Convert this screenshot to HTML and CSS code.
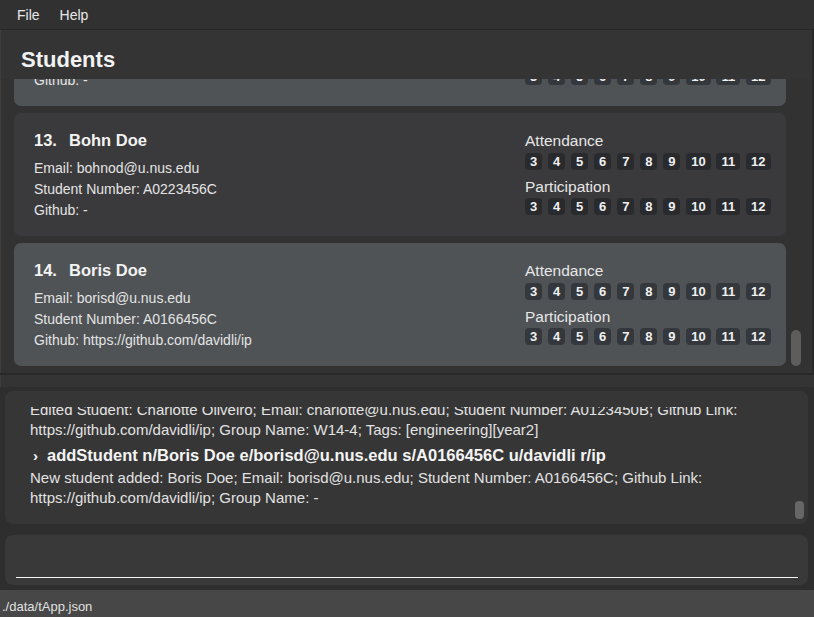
FILE: index.html
```html
<!DOCTYPE html>
<html>
<head>
<meta charset="utf-8">
<link rel="stylesheet" href="styles.css">
</head>
<body>
<div class="app">
  <div class="menubar">
    <span class="menu-item">File</span>
    <span class="menu-item">Help</span>
  </div>
  <div class="list-panel">
    <div class="list-title">Students</div>
    <div class="list-viewport">
      <div class="list-inner">
        <div class="card even">
          <div class="card-left">
            <div class="card-name"><span class="idx">12.</span><span>Bernice Doe</span></div>
            <div class="info">Email: berniced@u.nus.edu</div>
            <div class="info">Student Number: A0123456C</div>
            <div class="info">Github: -</div>
          </div>
          <div class="card-right">
            <div class="label">Attendance</div>
            <div class="chips"><span class="chip">3</span><span class="chip">4</span><span class="chip">5</span><span class="chip">6</span><span class="chip">7</span><span class="chip">8</span><span class="chip">9</span><span class="chip">10</span><span class="chip">11</span><span class="chip">12</span></div>
            <div class="label second">Participation</div>
            <div class="chips last"><span class="chip">3</span><span class="chip">4</span><span class="chip">5</span><span class="chip">6</span><span class="chip">7</span><span class="chip">8</span><span class="chip">9</span><span class="chip">10</span><span class="chip">11</span><span class="chip">12</span></div>
          </div>
        </div>
        <div class="card odd">
          <div class="card-left">
            <div class="card-name"><span class="idx">13.</span><span>Bohn Doe</span></div>
            <div class="info">Email: bohnod@u.nus.edu</div>
            <div class="info">Student Number: A0223456C</div>
            <div class="info">Github: -</div>
          </div>
          <div class="card-right">
            <div class="label">Attendance</div>
            <div class="chips"><span class="chip">3</span><span class="chip">4</span><span class="chip">5</span><span class="chip">6</span><span class="chip">7</span><span class="chip">8</span><span class="chip">9</span><span class="chip">10</span><span class="chip">11</span><span class="chip">12</span></div>
            <div class="label second">Participation</div>
            <div class="chips last"><span class="chip">3</span><span class="chip">4</span><span class="chip">5</span><span class="chip">6</span><span class="chip">7</span><span class="chip">8</span><span class="chip">9</span><span class="chip">10</span><span class="chip">11</span><span class="chip">12</span></div>
          </div>
        </div>
        <div class="card even">
          <div class="card-left">
            <div class="card-name"><span class="idx">14.</span><span>Boris Doe</span></div>
            <div class="info">Email: borisd@u.nus.edu</div>
            <div class="info">Student Number: A0166456C</div>
            <div class="info">Github: https://github.com/davidli/ip</div>
          </div>
          <div class="card-right">
            <div class="label">Attendance</div>
            <div class="chips"><span class="chip">3</span><span class="chip">4</span><span class="chip">5</span><span class="chip">6</span><span class="chip">7</span><span class="chip">8</span><span class="chip">9</span><span class="chip">10</span><span class="chip">11</span><span class="chip">12</span></div>
            <div class="label second">Participation</div>
            <div class="chips last"><span class="chip">3</span><span class="chip">4</span><span class="chip">5</span><span class="chip">6</span><span class="chip">7</span><span class="chip">8</span><span class="chip">9</span><span class="chip">10</span><span class="chip">11</span><span class="chip">12</span></div>
          </div>
        </div>
      </div>
    </div>
    <div class="list-thumb"></div>
  </div>
  <div class="divider"></div>
  <div class="split-strip"></div>
  <div class="lower">
    <div class="result-box">
      <div class="result-viewport">
        <div class="result-inner">
          <div class="out">Edited Student: Charlotte Oliveiro; Email: charlotte@u.nus.edu; Student Number: A0123450B; Github Link: https://github.com/davidli/ip; Group Name: W14-4; Tags: [engineering][year2]</div>
          <div class="cmd"><span class="chev">›</span>addStudent n/Boris Doe e/borisd@u.nus.edu s/A0166456C u/davidli r/ip</div>
          <div class="out">New student added: Boris Doe; Email: borisd@u.nus.edu; Student Number: A0166456C; Github Link: https://github.com/davidli/ip; Group Name: -</div>
        </div>
      </div>
      <div class="result-thumb"></div>
    </div>
    <div class="command-box">
      <div class="command-input"></div>
    </div>
  </div>
  <div class="statusbar">./data/tApp.json</div>
</div>
</body>
</html>
```
FILE: styles.css
```css
* { box-sizing: border-box; }
html, body {
  margin: 0;
  padding: 0;
  background: #2e2e2e;
}
body {
  font-family: "Liberation Sans", Arial, sans-serif;
  color: #e4e4e4;
}
.app {
  width: 814px;
  height: 617px;
  display: flex;
  flex-direction: column;
  overflow: hidden;
}
.menubar {
  height: 29px;
  flex: none;
  background: #313131;
  display: flex;
  align-items: center;
  padding-left: 7px;
  font-size: 14px;
  color: #e8e8e8;
  border-bottom: 1px solid #282828;
  box-sizing: content-box;
}
.menu-item {
  padding: 0 10px;
}
.list-panel {
  position: relative;
  height: 343px;
  flex: none;
  background: #343434;
  border-left: 1px solid #3e3e3e;
  border-right: 2px solid #2a2a2a;
  display: flex;
  flex-direction: column;
}
.list-title {
  height: 49px;
  flex: none;
  font-size: 22px;
  font-weight: bold;
  color: #f2f2f2;
  padding-left: 20px;
  padding-top: 17px;
  line-height: 26px;
}
.list-viewport {
  flex: 1;
  overflow: hidden;
  padding: 0 26px 0 13px;
  background: #323232;
}
.list-inner {
  margin-top: -96px;
  display: flex;
  flex-direction: column;
  gap: 7px;
}
.card {
  height: 123px;
  border-radius: 7px;
  display: flex;
  padding: 15px 15px 0 20px;
}
.card.even { background: #4f5356; }
.card.odd { background: #3a3a3c; }
.card-left { flex: 1; }
.card-name {
  font-size: 16.5px;
  font-weight: bold;
  line-height: 24px;
  color: #f2f2f2;
  display: flex;
  margin-bottom: 6px;
}
.idx {
  width: 35px;
}
.info {
  font-size: 14px;
  line-height: 21px;
  color: #e4e4e4;
}
.card-right {
  width: 246px;
}
.label {
  font-size: 15.5px;
  line-height: 18px;
  margin-top: 4px;
  color: #e6e6e6;
}
.label.second { margin-top: 8px; }
.chips {
  display: flex;
  gap: 5.8px;
  margin-top: 3px;
}
.chips.last { margin-top: 2px; }
.chip {
  height: 17px;
  line-height: 17px;
  padding: 0 5px;
  border-radius: 4px;
  background: rgba(20, 24, 28, 0.45);
  font-size: 13px;
  font-weight: bold;
  color: #f0f0f0;
}
.list-thumb {
  position: absolute;
  left: 790px;
  top: 300px;
  width: 10px;
  height: 36px;
  border-radius: 5px;
  background: #5d5d5d;
}
.divider {
  height: 2px;
  flex: none;
  background: #282828;
}
.split-strip {
  height: 12px;
  flex: none;
  background: #343434;
  border-left: 1px solid #3e3e3e;
}
.lower {
  flex: 1;
  padding: 4px 6px 5px 5px;
  display: flex;
  flex-direction: column;
  gap: 11px;
  background: #2e2e2e;
}
.result-box {
  position: relative;
  height: 133px;
  flex: none;
  background: #363636;
  border-radius: 8px;
  padding: 16px 30px 0 25px;
}
.result-viewport {
  height: 110px;
  overflow: hidden;
}
.result-inner {
  margin-top: -7px;
  font-size: 15px;
  line-height: 20px;
  color: #e2e2e2;
}
.cmd {
  margin-top: 5px;
  margin-bottom: 2px;
  font-weight: bold;
  color: #f4f4f4;
  font-size: 16.5px;
}
.chev {
  display: inline-block;
  width: 17px;
  padding-left: 3px;
  font-size: 15px;
}
.result-thumb {
  position: absolute;
  right: 4px;
  top: 110px;
  width: 9px;
  height: 18px;
  border-radius: 4px;
  background: #666666;
}
.command-box {
  height: 50px;
  flex: none;
  background: #393939;
  border-radius: 8px;
  padding: 0 10px 0 11px;
}
.command-input {
  height: 43px;
  border-bottom: 1px solid #f4f4f4;
}
.statusbar {
  height: 27px;
  flex: none;
  background: #474747;
  font-size: 13px;
  line-height: 27px;
  padding-left: 2px;
  color: #e0e0e0;
  padding-top: 3px;
}
```
